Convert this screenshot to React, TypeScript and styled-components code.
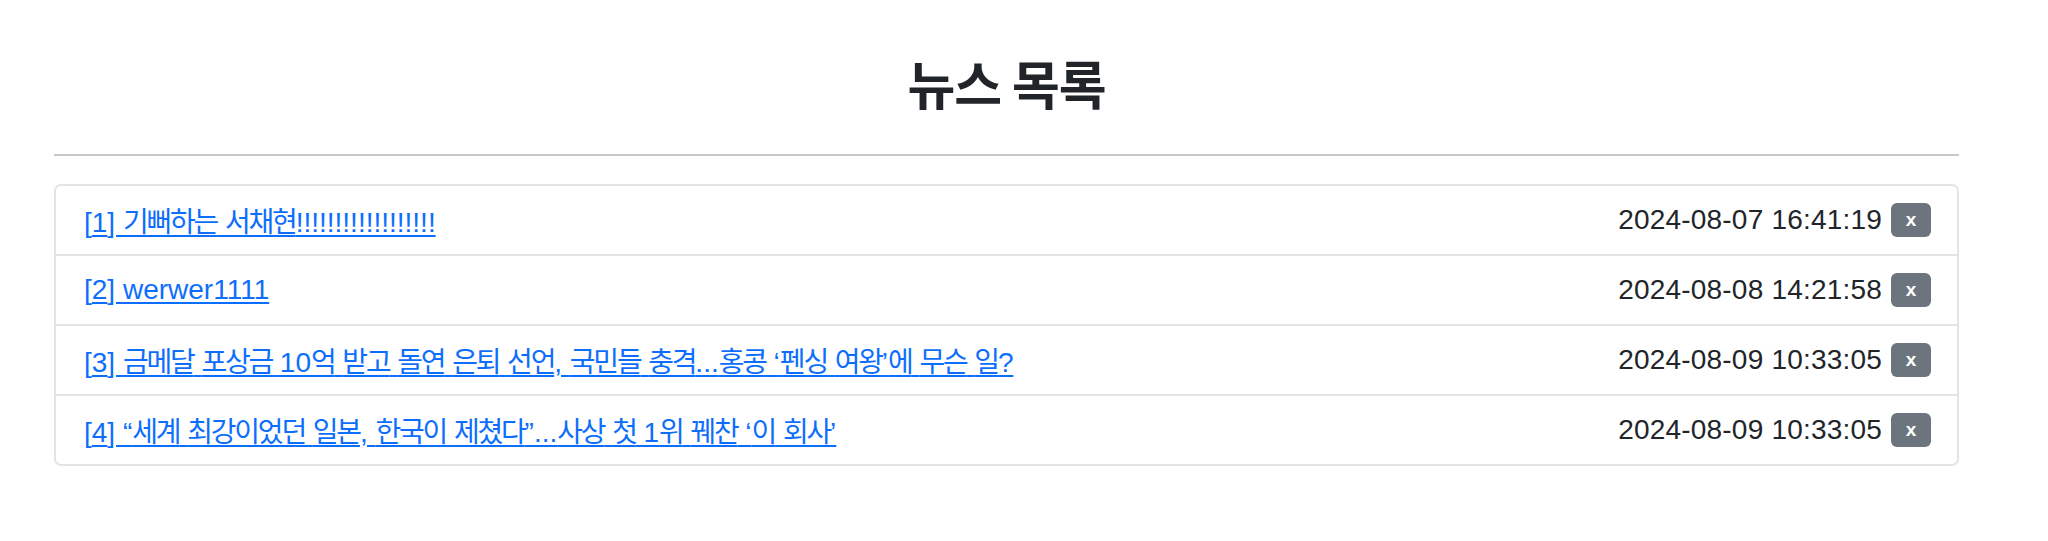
import React from 'react'
import styled, { createGlobalStyle } from 'styled-components'

const GlobalStyle = createGlobalStyle`
  body {
    margin: 0;
    background: #fff;
    font-family: "Liberation Sans", "Noto Sans CJK KR", sans-serif;
    color: #212529;
  }
`

const Page = styled.div`
  margin: 0 89px 0 54px;
  padding-top: 47px;
`

const Title = styled.h2`
  margin: 0;
  text-align: center;
  font-family: "Noto Sans CJK KR", sans-serif;
  font-size: 52px;
  font-weight: 700;
  line-height: 72px;
  letter-spacing: -1px;
  color: #212529;
`

const Rule = styled.hr`
  margin: 35px 0 28px;
  border: 0;
  border-top: 2px solid #c8c8c8;
`

const List = styled.ul`
  list-style: none;
  margin: 0;
  padding: 0;
  border: 2px solid #e2e4e6;
  border-radius: 7px;
`

const Item = styled.li`
  display: flex;
  align-items: center;
  justify-content: space-between;
  height: 68px;
  padding: 0 26px 0 28px;
  font-size: 28px;

  & + & {
    border-top: 2px solid #e2e4e6;
  }
`

const TitleLink = styled.a`
  color: #0d6efd;
  text-decoration: underline;
  text-underline-offset: 3px;
`

// hangul runs are set a little tighter than the CJK font draws them
const Hangul = styled.span`
  letter-spacing: -2.2px;
`

const Meta = styled.div`
  display: flex;
  align-items: center;
  gap: 9px;
`

const Date = styled.span`
  color: #212529;
  letter-spacing: 0.2px;
`

const DeleteButton = styled.button`
  width: 40px;
  height: 34px;
  border: 0;
  border-radius: 6px;
  background: #6c757d;
  color: #fff;
  font-family: "Liberation Sans", sans-serif;
  font-weight: 700;
  font-size: 19px;
  line-height: 1;
  padding: 0 0 2px;
  cursor: pointer;
`

const news = [
  { id: 1, title: '기뻐하는 서채현!!!!!!!!!!!!!!!!!!', date: '2024-08-07 16:41:19' },
  { id: 2, title: 'werwer1111', date: '2024-08-08 14:21:58' },
  { id: 3, title: '금메달 포상금 10억 받고 돌연 은퇴 선언, 국민들 충격...홍콩 ‘펜싱 여왕’에 무슨 일?', date: '2024-08-09 10:33:05' },
  { id: 4, title: '“세계 최강이었던 일본, 한국이 제쳤다”...사상 첫 1위 꿰찬 ‘이 회사’', date: '2024-08-09 10:33:05' },
]

function splitRuns(text: string) {
  return text.split(/([\uAC00-\uD7A3]+)/).filter(Boolean).map((part, i) =>
    /[\uAC00-\uD7A3]/.test(part) ? <Hangul key={i}>{part}</Hangul> : part
  )
}

export default function App() {
  return (
    <>
      <GlobalStyle />
      <Page>
        <Title>뉴스 목록</Title>
        <Rule />
        <List>
          {news.map(n => (
            <Item key={n.id}>
              <TitleLink href="#">[{n.id}] {splitRuns(n.title)}</TitleLink>
              <Meta>
                <Date>{n.date}</Date>
                <DeleteButton>x</DeleteButton>
              </Meta>
            </Item>
          ))}
        </List>
      </Page>
    </>
  )
}
